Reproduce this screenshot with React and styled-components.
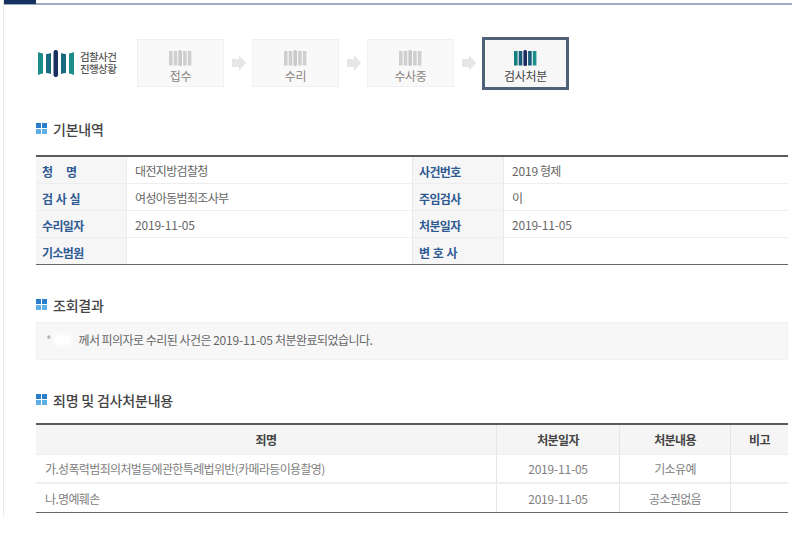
import React from "react";
import styled, { createGlobalStyle } from "styled-components";

const Global = createGlobalStyle`
  html, body { margin: 0; padding: 0; background: #fff; }
  body { font-family: "Noto Sans CJK KR", "Liberation Sans", sans-serif; font-size: 12px; color: #666; }
  * { box-sizing: border-box; }
`;

const Page = styled.div`
  width: 789px;
  height: 517px;
  margin-left: 3px;
  border-left: 1px solid #e9e9e9;
  overflow: hidden;
`;
const TopBar = styled.div`
  height: 5px;
  border-bottom: 2px solid #9dabc1;
  &::before { content: ""; display: block; width: 32px; height: 4px; background: #16305f; }
`;
const Content = styled.div`
  width: 752px;
  margin-left: 32px;
  padding-top: 32px;
`;
const Steps = styled.div`
  display: flex;
  align-items: center;
  height: 52px;
`;
const Brand = styled.div`
  display: flex;
  align-items: center;
  width: 101px;
  padding-left: 2px;
  gap: 6px;
  flex: none;
`;
const BrandText = styled.div`
  font-size: 10.5px;
  line-height: 12px;
  font-weight: 500;
  color: #555;
  letter-spacing: -0.6px;
  white-space: nowrap;
`;
const Step = styled.div`
  width: 87px;
  height: ${p => (p.$active ? "53px" : "48px")};
  flex: none;
  display: flex;
  flex-direction: column;
  align-items: center;
  padding-top: 10px;
  gap: 2px;
  background: ${p => (p.$active ? "#f7f7f7" : "#f9f9f9")};
  border: ${p => (p.$active ? "3px solid #4f6079" : "1px solid #f0f0f0")};
  color: ${p => (p.$active ? "#444" : "#8b8583")};
  font-size: 12px;
  line-height: 16px;
  letter-spacing: -0.3px;
`;
const Arrow = styled.svg`
  width: 14px;
  height: 16px;
  margin: 0 6px 0 8px;
  flex: none;
`;
const Heading = styled.h2`
  display: flex;
  align-items: center;
  gap: 6px;
  margin: ${p => p.$top}px 0 ${p => p.$bottom}px;
  height: 18px;
  font-size: 14px;
  font-weight: 500;
  color: #444;
  line-height: 18px;
  letter-spacing: -0.2px;
`;
const Table = styled.table`
  width: 752px;
  table-layout: fixed;
  border-collapse: separate;
  border-spacing: 0;
  border-top: 2px solid #5a5a5a;
  border-bottom: 1px solid #666;
  font-size: 12px;
  letter-spacing: -0.65px;
`;
const Num = styled.span`
  letter-spacing: -0.2px;
`;
const Label = styled.th`
  height: ${p => (p.$last ? "26px" : "27px")};
  padding: 2px 0 0 6px;
  text-align: left;
  font-weight: 700;
  color: #2f5a92;
  background: #f6f6f7;
  border-left: ${p => (p.$first ? "0" : "1px solid #e8eaee")};
  border-right: 1px solid #e8eaee;
  border-bottom: ${p => (p.$last ? "0" : "1px solid #eeeef0")};
  white-space: pre;
  word-spacing: 1.3px;
`;
const Cell = styled.td`
  height: ${p => (p.$last ? "26px" : "27px")};
  padding: 0 0 0 8px;
  color: #666;
  border-bottom: ${p => (p.$last ? "0" : "1px solid #eeeef0")};
`;
const Result = styled.div`
  width: 752px;
  height: 38px;
  display: flex;
  align-items: center;
  padding: 0 0 3px 9px;
  background: #f7f7f8;
  border: 1px solid #f0f0f0;
  color: #666;
  letter-spacing: -0.53px;
  white-space: pre;
`;
const Star = styled.span`
  color: #aaa;
`;
const Masked = styled.span`
  display: inline-block;
  width: 17px;
  height: 12px;
  margin: 0 3px 0 3px;
  background: #fff;
  filter: blur(2px);
`;
const HeadCell = styled.th`
  height: 30px;
  background: #f5f5f5;
  color: #444;
  font-weight: 700;
  text-align: center;
  border-right: ${p => (p.$end ? "0" : "1px solid #e3e5ea")};
  border-bottom: 1px solid #eeeef0;
`;
const BodyCell = styled.td`
  height: ${p => (p.$last ? "28px" : "29px")};
  padding: ${p => (p.$left ? "0 0 0 9px" : "0")};
  text-align: ${p => (p.$left ? "left" : "center")};
  color: #808080;
  border-right: ${p => (p.$end ? "0" : "1px solid #e3e5ea")};
  border-bottom: ${p => (p.$last ? "0" : "2px solid #eeeef0")};
`;

const Bars = ({ colors }) => (
  <svg width="23" height="16" viewBox="0 0 23 16" style={{ flex: "none" }}>
    {colors.map((c, i) => {
      const tall = i === 2;
      return <rect key={i} x={i * 4.7} y={tall ? 0 : 1} width="3.6" height={tall ? 16 : 14.5} rx={tall ? 1.5 : 0} fill={c} />;
    })}
  </svg>
);
const grey = ["#cfcfcf", "#cfcfcf", "#c9c9c9", "#cfcfcf", "#cfcfcf"];
const live = ["#16807f", "#1a5d7c", "#1a2f5f", "#1a5d7c", "#1f8f8b"];

const Logo = () => (
  <svg width="36" height="27" viewBox="0 0 36 27">
    <path d="M0 2 Q2.5 3.2 5 3.5 V23.5 Q2.5 23.8 0 25Z" fill="#1a8c8a" />
    <path d="M8 4 Q10.5 4 13 3 V24 Q10.5 23 8 23Z" fill="#1a6a80" />
    <rect x="15.5" y="0" width="4.5" height="27" rx="2" fill="#1a2f5f" />
    <path d="M23 3 Q25.5 4 28 4 V23 Q25.5 23 23 24Z" fill="#1a6a80" />
    <path d="M31 3.5 Q33.5 3.2 36 2 V25 Q33.5 23.8 31 23.5Z" fill="#1a8c8a" />
  </svg>
);
const ArrowIcon = () => (
  <Arrow viewBox="0 0 14 16">
    <path d="M0 4 H7 V0 L14 8 L7 16 V12 H0Z" fill="#e6e6e6" />
  </Arrow>
);
const HeadIcon = () => (
  <svg width="11" height="11" viewBox="0 0 11 11" style={{ flex: "none", marginTop: -2 }}>
    <rect width="5" height="5" fill="#2a7fcb" />
    <rect x="6" width="5" height="5" fill="#2a7fcb" />
    <rect y="6" width="5" height="5" fill="#5eaee8" />
    <rect x="6" y="6" width="5" height="5" fill="#5eaee8" />
  </svg>
);

export default function App() {
  return (
    <>
      <Global />
      <Page>
        <TopBar />
        <Content>
          <Steps>
            <Brand>
              <Logo />
              <BrandText>검찰사건<br />진행상황</BrandText>
            </Brand>
            <Step><Bars colors={grey} />접수</Step>
            <ArrowIcon />
            <Step><Bars colors={grey} />수리</Step>
            <ArrowIcon />
            <Step><Bars colors={grey} />수사중</Step>
            <ArrowIcon />
            <Step $active><Bars colors={live} />검사처분</Step>
          </Steps>
          <Heading $top={31} $bottom={17}><HeadIcon />기본내역</Heading>
          <Table>
            <colgroup>
              <col style={{ width: 91 }} />
              <col style={{ width: 285 }} />
              <col style={{ width: 92 }} />
              <col />
            </colgroup>
            <tbody>
              <tr>
                <Label $first>{"청    명"}</Label><Cell>대전지방검찰청</Cell>
                <Label>사건번호</Label><Cell><Num>2019</Num> 형제</Cell>
              </tr>
              <tr>
                <Label $first>검 사 실</Label><Cell>여성아동범죄조사부</Cell>
                <Label>주임검사</Label><Cell>이</Cell>
              </tr>
              <tr>
                <Label $first>수리일자</Label><Cell><Num>2019-11-05</Num></Cell>
                <Label>처분일자</Label><Cell><Num>2019-11-05</Num></Cell>
              </tr>
              <tr>
                <Label $first $last>기소범원</Label><Cell $last />
                <Label $last>변 호 사</Label><Cell $last />
              </tr>
            </tbody>
          </Table>
          <Heading $top={31} $bottom={8}><HeadIcon />조회결과</Heading>
          <Result><Star>*</Star><Masked />{"  께서 피의자로 수리된 사건은 "}<Num>2019-11-05</Num>{" 처분완료되었습니다."}</Result>
          <Heading $top={31} $bottom={14}><HeadIcon />죄명 및 검사처분내용</Heading>
          <Table>
            <colgroup>
              <col style={{ width: 461 }} />
              <col style={{ width: 123 }} />
              <col style={{ width: 111 }} />
              <col />
            </colgroup>
            <thead>
              <tr>
                <HeadCell>죄명</HeadCell>
                <HeadCell>처분일자</HeadCell>
                <HeadCell>처분내용</HeadCell>
                <HeadCell $end>비고</HeadCell>
              </tr>
            </thead>
            <tbody>
              <tr>
                <BodyCell $left>가.성폭력범죄의처벌등에관한특례법위반(카메라등이용촬영)</BodyCell>
                <BodyCell><Num>2019-11-05</Num></BodyCell>
                <BodyCell>기소유예</BodyCell>
                <BodyCell $end />
              </tr>
              <tr>
                <BodyCell $left $last>나.명예훼손</BodyCell>
                <BodyCell $last><Num>2019-11-05</Num></BodyCell>
                <BodyCell $last>공소권없음</BodyCell>
                <BodyCell $end $last />
              </tr>
            </tbody>
          </Table>
        </Content>
      </Page>
    </>
  );
}
